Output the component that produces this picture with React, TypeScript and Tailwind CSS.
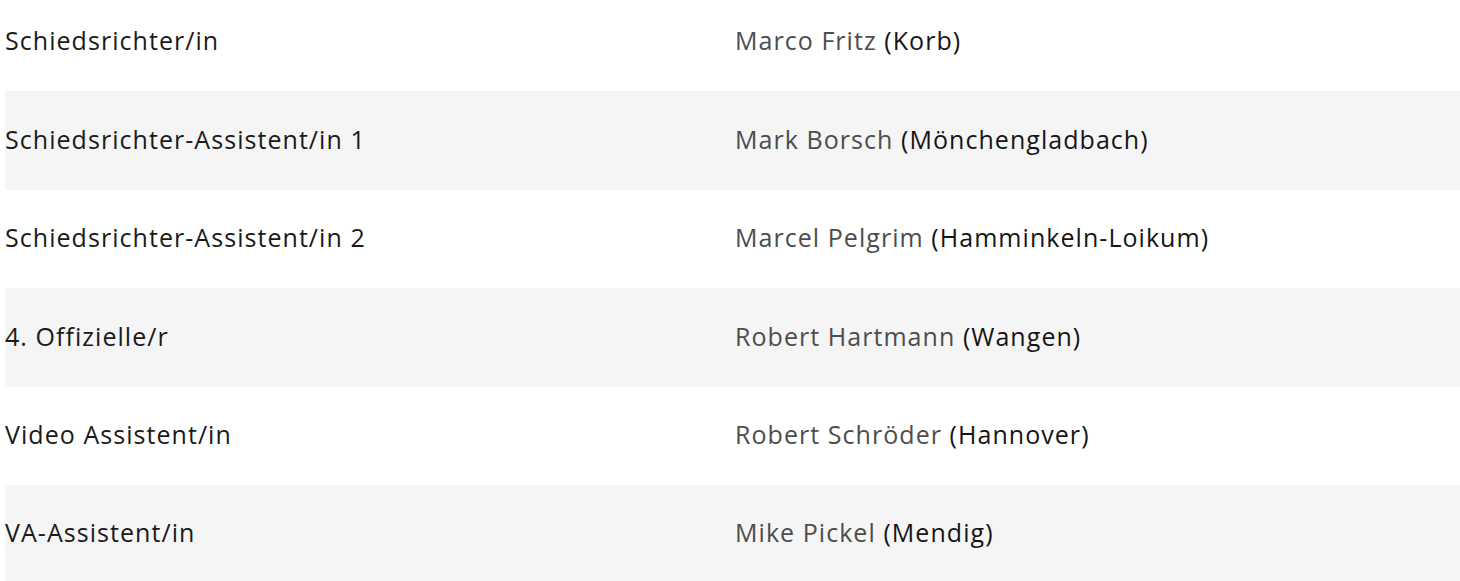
import React from "react";

const rows: [string, string, string][] = [
  ["Schiedsrichter/in", "Marco Fritz", "(Korb)"],
  ["Schiedsrichter-Assistent/in 1", "Mark Borsch", "(Mönchengladbach)"],
  ["Schiedsrichter-Assistent/in 2", "Marcel Pelgrim", "(Hamminkeln-Loikum)"],
  ["4. Offizielle/r", "Robert Hartmann", "(Wangen)"],
  ["Video Assistent/in", "Robert Schröder", "(Hannover)"],
  ["VA-Assistent/in", "Mike Pickel", "(Mendig)"],
];

export default function App() {
  return (
    <div className="w-[1460px] h-[581px] overflow-hidden bg-white">
      <div className="-mt-[7px] ml-[5px] flex flex-col font-['Open_Sans',sans-serif] text-[25px] tracking-[1.05px] text-[#1a1a1a]">
        {rows.map(([role, name, city], i) => (
          <div
            key={role}
            className={`grid grid-cols-[730px_1fr] items-center h-[98.4px] pb-[2px] ${i % 2 === 1 ? "bg-[#f5f5f5]" : "bg-white"}`}
          >
            <div>{role}</div>
            <div>
              <span className="text-[#4d4d4d]">{name}</span> <span className="text-[#151515]">{city}</span>
            </div>
          </div>
        ))}
      </div>
    </div>
  );
}
